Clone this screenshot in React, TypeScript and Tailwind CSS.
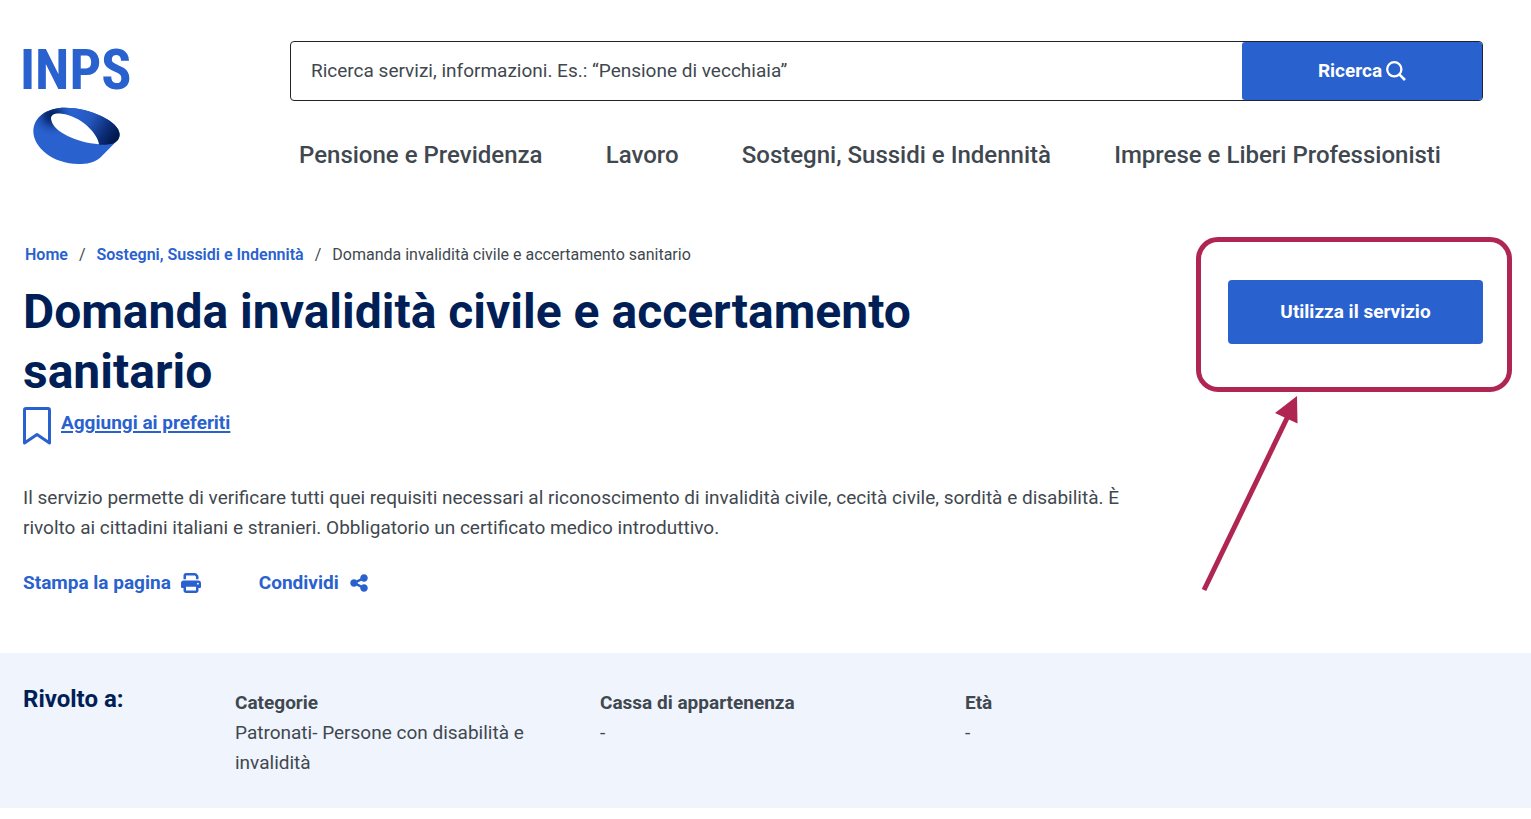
import { FaPrint, FaShareNodes } from "react-icons/fa6";

const menu = [
  "Pensione e Previdenza",
  "Lavoro",
  "Sostegni, Sussidi e Indennità",
  "Imprese e Liberi Professionisti",
];

const audience = [
  { label: "Categorie", value: "Patronati- Persone con disabilità e invalidità" },
  { label: "Cassa di appartenenza", value: "-" },
  { label: "Età", value: "-" },
];

function Logo() {
  return (
    <a href="#" aria-label="INPS" className="-ml-1 block w-[120px]">
      <svg viewBox="0 0 120 130" className="h-[130px] w-[120px]">
        <defs>
          <linearGradient id="band" gradientUnits="userSpaceOnUse" x1="190" y1="270" x2="310" y2="345">
            <stop offset="0" stopColor="#2961cf" />
            <stop offset="0.35" stopColor="#2558be" />
            <stop offset="0.75" stopColor="#0d2d78" />
            <stop offset="1" stopColor="#001a4e" />
          </linearGradient>
          <radialGradient id="fold" gradientUnits="userSpaceOnUse" cx="126" cy="270" r="66">
            <stop offset="0" stopColor="#001f5c" />
            <stop offset="0.3" stopColor="#0a2b74" stopOpacity="0.9" />
            <stop offset="1" stopColor="#2961cf" stopOpacity="0" />
          </radialGradient>
        </defs>
        <text
          x="1"
          y="53"
          fill="#2961cf"
          className="font-['Roboto_Condensed',Roboto,sans-serif] text-[56px] font-bold"
        >
          INPS
        </text>
        <svg x="14" y="71" width="88" height="58" viewBox="69 245 264 174">
          <path
            fill="#2961cf"
            d="M70 318C70 276 110 247 165 247C240 247 329 288 329 327C329 340 322 346 312 355L272 396C252 414 230 416 205 416C130 416 70 367 70 318Z"
          />
          <path
            fill="url(#band)"
            d="M124 254C140 248 150 247 165 247C240 247 329 288 329 327C329 343 318 353 305 356C290 359 280 358 267 358C262 325 212 268 155 264C145 263 134 264 128 268Z"
          />
          <path
            fill="url(#fold)"
            d="M70 318C70 276 110 247 165 247C175 247 185 248 196 249L192 275L160 290L170 345Z"
          />
          <path
            fill="#fff"
            d="M124 285C119 268 135 263 155 265C212 271 264 325 267 357C200 352 131 320 124 285Z"
          />
        </svg>
      </svg>
    </a>
  );
}

function SearchIcon() {
  return (
    <svg viewBox="0 0 20 20" className="size-5" fill="none" stroke="currentColor" strokeWidth="2.3">
      <circle cx="8.3" cy="8.3" r="7.1" />
      <path d="M13.3 13.3L19 19" strokeWidth="2.6" />
    </svg>
  );
}

function Header() {
  return (
    <header className="flex pt-9">
      <div className="w-[267px] shrink-0">
        <Logo />
      </div>
      <div className="min-w-0 flex-1 pt-[5px]">
        <form className="flex h-[60px] rounded border border-[#212529]">
          <input
            type="text"
            aria-label="Ricerca"
            placeholder="Ricerca servizi, informazioni. Es.: “Pensione di vecchiaia”"
            className="min-w-0 flex-1 px-5 text-[19px] outline-none placeholder:text-[#3f484f] placeholder:opacity-100"
          />
          <button
            type="button"
            className="flex w-60 items-center justify-center gap-1 rounded-[3px] bg-[#2961cf] text-[19px] font-bold text-white"
          >
            Ricerca
            <SearchIcon />
          </button>
        </form>
        <nav className="mt-9 flex justify-between pr-[42px] pl-[9px]">
          {menu.map((item) => (
            <a key={item} href="#" className="text-2xl leading-9 font-medium whitespace-nowrap">
              {item}
            </a>
          ))}
        </nav>
      </div>
    </header>
  );
}

function Breadcrumb() {
  return (
    <nav aria-label="Percorso" className="flex h-[30px] items-center pl-0.5">
      <a href="#" className="font-semibold text-[#2961cf]">Home</a>
      <span className="px-[11px]">/</span>
      <a href="#" className="font-semibold text-[#2961cf]">Sostegni, Sussidi e Indennità</a>
      <span className="px-[11px]">/</span>
      <span>Domanda invalidità civile e accertamento sanitario</span>
    </nav>
  );
}

function ServiceButton() {
  return (
    <aside className="relative mt-10 w-[255px] shrink-0">
      <button
        type="button"
        className="h-16 w-full rounded bg-[#2961cf] text-[19px] font-bold text-white"
      >
        Utilizza il servizio
      </button>
      {/* highlight frame and arrow drawn over the page */}
      <div className="pointer-events-none absolute -top-[43px] -left-8 h-[155px] w-[316px] rounded-[22px] border-5 border-[#b02653]" />
      <svg
        viewBox="0 0 104 200"
        className="pointer-events-none absolute top-[114px] -left-8 h-[200px] w-[104px]"
      >
        <path d="M8 196L93 20" stroke="#b02653" strokeWidth="5" />
        <path d="M101 2L79 19L101.500 29.500Z" fill="#b02653" />
      </svg>
    </aside>
  );
}

export default function App() {
  return (
    <div className="bg-white font-[Roboto,'Liberation_Sans',sans-serif] text-[#3f484f]">
      <div className="pr-12 pl-[23px]">
        <Header />
        <main className="flex justify-between gap-10 pt-[67px] pb-[55px]">
          <div className="flex-1">
            <Breadcrumb />
            <h1 className="mt-3 max-w-[980px] text-[48px] leading-[60px] font-bold text-[#001f57]">
              Domanda invalidità civile e accertamento sanitario
            </h1>
            <a href="#" className="mt-[5px] flex w-fit gap-[10px] text-[#2961cf]">
              <svg viewBox="0 0 28 38" className="h-[38px] w-7" fill="none" stroke="currentColor" strokeWidth="3">
                <path d="M1.500 36V3Q1.500 1.500 3 1.500H25Q26.500 1.500 26.500 3V36L14 27.500Z" strokeLinejoin="round" />
              </svg>
              <span className="text-[19px] leading-8 font-bold underline decoration-2 underline-offset-2">
                Aggiungi ai preferiti
              </span>
            </a>
            <p className="mt-[38px] max-w-[1100px] text-[19px] leading-[30px]">
              Il servizio permette di verificare tutti quei requisiti necessari al riconoscimento di
              invalidità civile, cecità civile, sordità e disabilità. È rivolto ai cittadini italiani
              e stranieri. Obbligatorio un certificato medico introduttivo.
            </p>
            <div className="mt-[25px] flex gap-[58px] text-[19px] leading-[30px] font-bold text-[#2961cf]">
              <button type="button" className="flex items-center gap-[10px]">
                Stampa la pagina
                <FaPrint className="size-5" />
              </button>
              <button type="button" className="flex items-center gap-[10px]">
                Condividi
                <FaShareNodes className="size-5" />
              </button>
            </div>
          </div>
          <ServiceButton />
        </main>
      </div>
      <section className="flex bg-[#f0f4fd] pt-[30px] pr-12 pb-[30px] pl-[23px]">
        <h2 className="w-[212px] shrink-0 text-2xl font-bold text-[#001f57]">Rivolto a:</h2>
        <dl className="flex flex-1 pt-[5px] text-[19px] leading-[30px]">
          {audience.map((item) => (
            <div key={item.label} className="w-[365px] pr-12">
              <dt className="font-bold">{item.label}</dt>
              <dd>{item.value}</dd>
            </div>
          ))}
        </dl>
      </section>
    </div>
  );
}
